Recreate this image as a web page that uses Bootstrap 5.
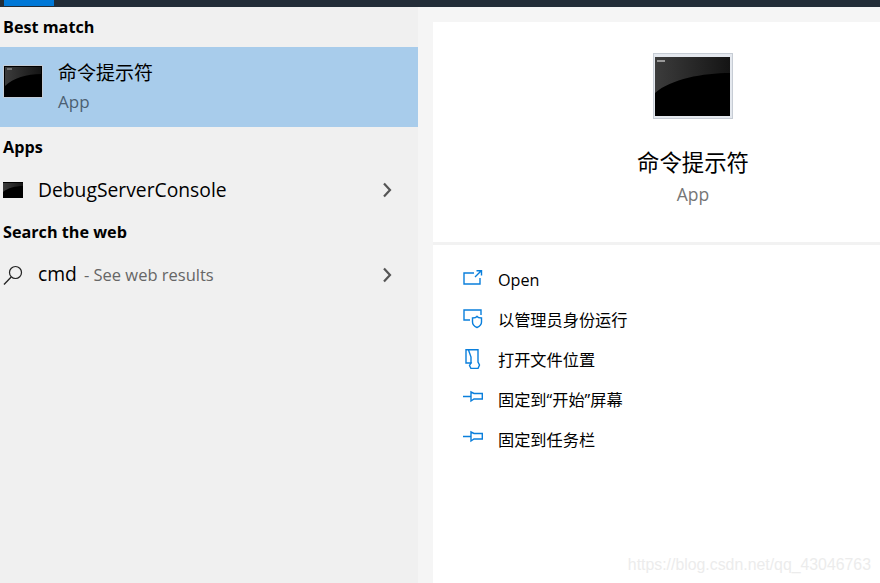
<!DOCTYPE html>
<html lang="en"><head><meta charset="utf-8"><title>Search</title>
<link href="https://cdn.jsdelivr.net/npm/bootstrap@5.3.0/dist/css/bootstrap.min.css" rel="stylesheet">
<style>
html,body{height:100%;overflow:hidden}
body{width:880px;height:583px;background:#f5f5f5;font-family:"Open Sans","Noto Sans CJK SC",sans-serif;color:#000;position:relative}
.topbar{height:7px;background:#232d38}
.topmark{width:50px;height:6px;margin-left:4px;background:#0078d7}
.panes{height:576px;width:880px;overflow:hidden}
.leftpane{width:418px;flex:none;background:#f0f0f0}
.gutter{width:15px;flex:none}
.rightpane{width:520px;flex:none;margin-top:15px;background:#fff;height:561px}
.sect{font-size:16.2px;font-weight:700;line-height:22px;padding-left:3px}
.s1{padding-top:9px;height:40px}
.s2{height:40px;padding-top:9px}
.s3{height:40px;padding-top:9px}
.hit{height:80px;background:#a8cceb;padding-left:3px}
.hit-ic{margin-bottom:11px}
.hit-txt{margin-left:15px}
.hit-name{font-size:19px;line-height:26px;margin-top:-2px}
.hit-sub{font-size:17px;line-height:22px;color:#4c6072;margin-top:5px}
.rowitem{height:45px;padding-left:3px}
.rowname{font-size:19.3px;line-height:24px;margin-left:15px}
.rowdim{font-size:16.5px;color:#666;margin-left:2px}
.chev{margin-left:auto;margin-right:26px}
.hero{height:220px;padding-top:31px}
.hero-name{font-size:22.4px;line-height:30px;margin-top:29px}
.hero-sub{font-size:17.5px;line-height:22px;color:#767676;margin-top:5px}
.rule{height:3px;background:#f2f2f2}
.acts{padding-top:15px;padding-left:30px}
.act{height:40px;font-size:16.2px;line-height:20px}
.act-ic{width:20px;height:20px;margin-right:15px;margin-top:-2px}
.wm{position:absolute;right:9px;top:555px;font-size:15.85px;line-height:20px;color:#ececec;font-family:"Liberation Sans",sans-serif}
</style></head><body>
<svg width="0" height="0" class="position-absolute"><defs><linearGradient id="sheen" x1="0" x2="1" y1="0" y2="0"><stop offset="0" stop-color="#3c3c3c"/><stop offset="1" stop-color="#141414"/></linearGradient></defs></svg>
<div class="topbar"><div class="topmark"></div></div>
<div class="panes d-flex">
 <div class="leftpane">
  <div class="sect s1">Best match</div>
  <div class="hit d-flex align-items-center">
   <svg class="hit-ic" width="40" height="33" viewBox="0 0 40 33"><rect x=".5" y=".5" width="39" height="32" fill="#000" stroke="#c3ccd6"/><path d="M2 2h36v7C24 9 10 13 2 21z" fill="url(#sheen)"/><path d="M4 4h5" stroke="#aaa"/></svg>
   <div class="hit-txt"><div class="hit-name">命令提示符</div><div class="hit-sub">App</div></div>
  </div>
  <div class="sect s2">Apps</div>
  <div class="rowitem d-flex align-items-center">
   <svg width="20" height="16" viewBox="0 0 20 16"><rect width="20" height="16" fill="#000"/><path d="M0 1h20v3C12 4 5 6 0 10z" fill="url(#sheen)"/></svg>
   <div class="rowname">DebugServerConsole</div>
   <svg class="chev" width="10" height="16" viewBox="0 0 10 16"><path d="M2 1.500l6 6.500-6 6.500" fill="none" stroke="#555" stroke-width="2.200"/></svg>
  </div>
  <div class="sect s3">Search the web</div>
  <div class="rowitem d-flex align-items-center">
   <svg width="20" height="20" viewBox="0 0 20 20"><circle cx="12.500" cy="7.500" r="6" fill="none" stroke="#222" stroke-width="1.200"/><path d="M8.200 12 1 19.500" stroke="#222" stroke-width="1.300"/></svg>
   <div class="rowname">cmd <span class="rowdim">- See web results</span></div>
   <svg class="chev" width="10" height="16" viewBox="0 0 10 16"><path d="M2 1.500l6 6.500-6 6.500" fill="none" stroke="#555" stroke-width="2.200"/></svg>
  </div>
 </div>
 <div class="gutter"></div>
 <div class="rightpane">
  <div class="hero d-flex flex-column align-items-center">
   <svg width="80" height="66" viewBox="0 0 80 66"><rect x=".5" y=".5" width="79" height="65" fill="#e4e8ee" stroke="#c6ccd4"/><rect x="2" y="4" width="75" height="59" fill="#000"/><path d="M2 4h75v16C50 20 18 26 2 40z" fill="url(#sheen)"/><path d="M4 8h8" stroke="#999" stroke-width="2"/></svg>
   <div class="hero-name">命令提示符</div>
   <div class="hero-sub">App</div>
  </div>
  <div class="rule"></div>
  <div class="acts">
   <div class="act d-flex align-items-center"><svg class="act-ic" viewBox="0 0 20 20" fill="none" stroke="#0a7fdc" stroke-width="1.400"><path d="M11 4H1v11h16V9M12 8l6-6M13.500 1.700H18.500V6.500"/></svg>Open</div>
   <div class="act d-flex align-items-center"><svg class="act-ic" viewBox="0 0 20 20" fill="none" stroke="#0a7fdc" stroke-width="1.400"><path d="M7 11H1V1h17v5M9.500 9c2.500 0 4-.8 4.500-1.500C14.500 8.200 16 9 18.500 9v4c0 2.500-2 4.500-4.500 5.500-2.500-1-4.500-3-4.500-5.500z"/></svg>以管理员身份运行</div>
   <div class="act d-flex align-items-center"><svg class="act-ic" viewBox="0 0 20 20" fill="none" stroke="#0a7fdc" stroke-width="1.400"><path d="M3 0.700h12V13l1.500 3-1.500 3.500H8l-1.500-3 1.500-2.500H3zM8 15V8L5.500 1"/></svg>打开文件位置</div>
   <div class="act d-flex align-items-center"><svg class="act-ic" viewBox="0 0 20 20" fill="none" stroke="#0a7fdc" stroke-width="1.400"><path d="M0 7.500h8M8 3v9l3-2h8.300V4.500H11z"/></svg>固定到“开始”屏幕</div>
   <div class="act d-flex align-items-center"><svg class="act-ic" viewBox="0 0 20 20" fill="none" stroke="#0a7fdc" stroke-width="1.400"><path d="M0 7.500h8M8 3v9l3-2h8.300V4.500H11z"/></svg>固定到任务栏</div>
  </div>
 </div>
</div>
<div class="wm">https://blog.csdn.net/qq_43046763</div>
</body></html>
